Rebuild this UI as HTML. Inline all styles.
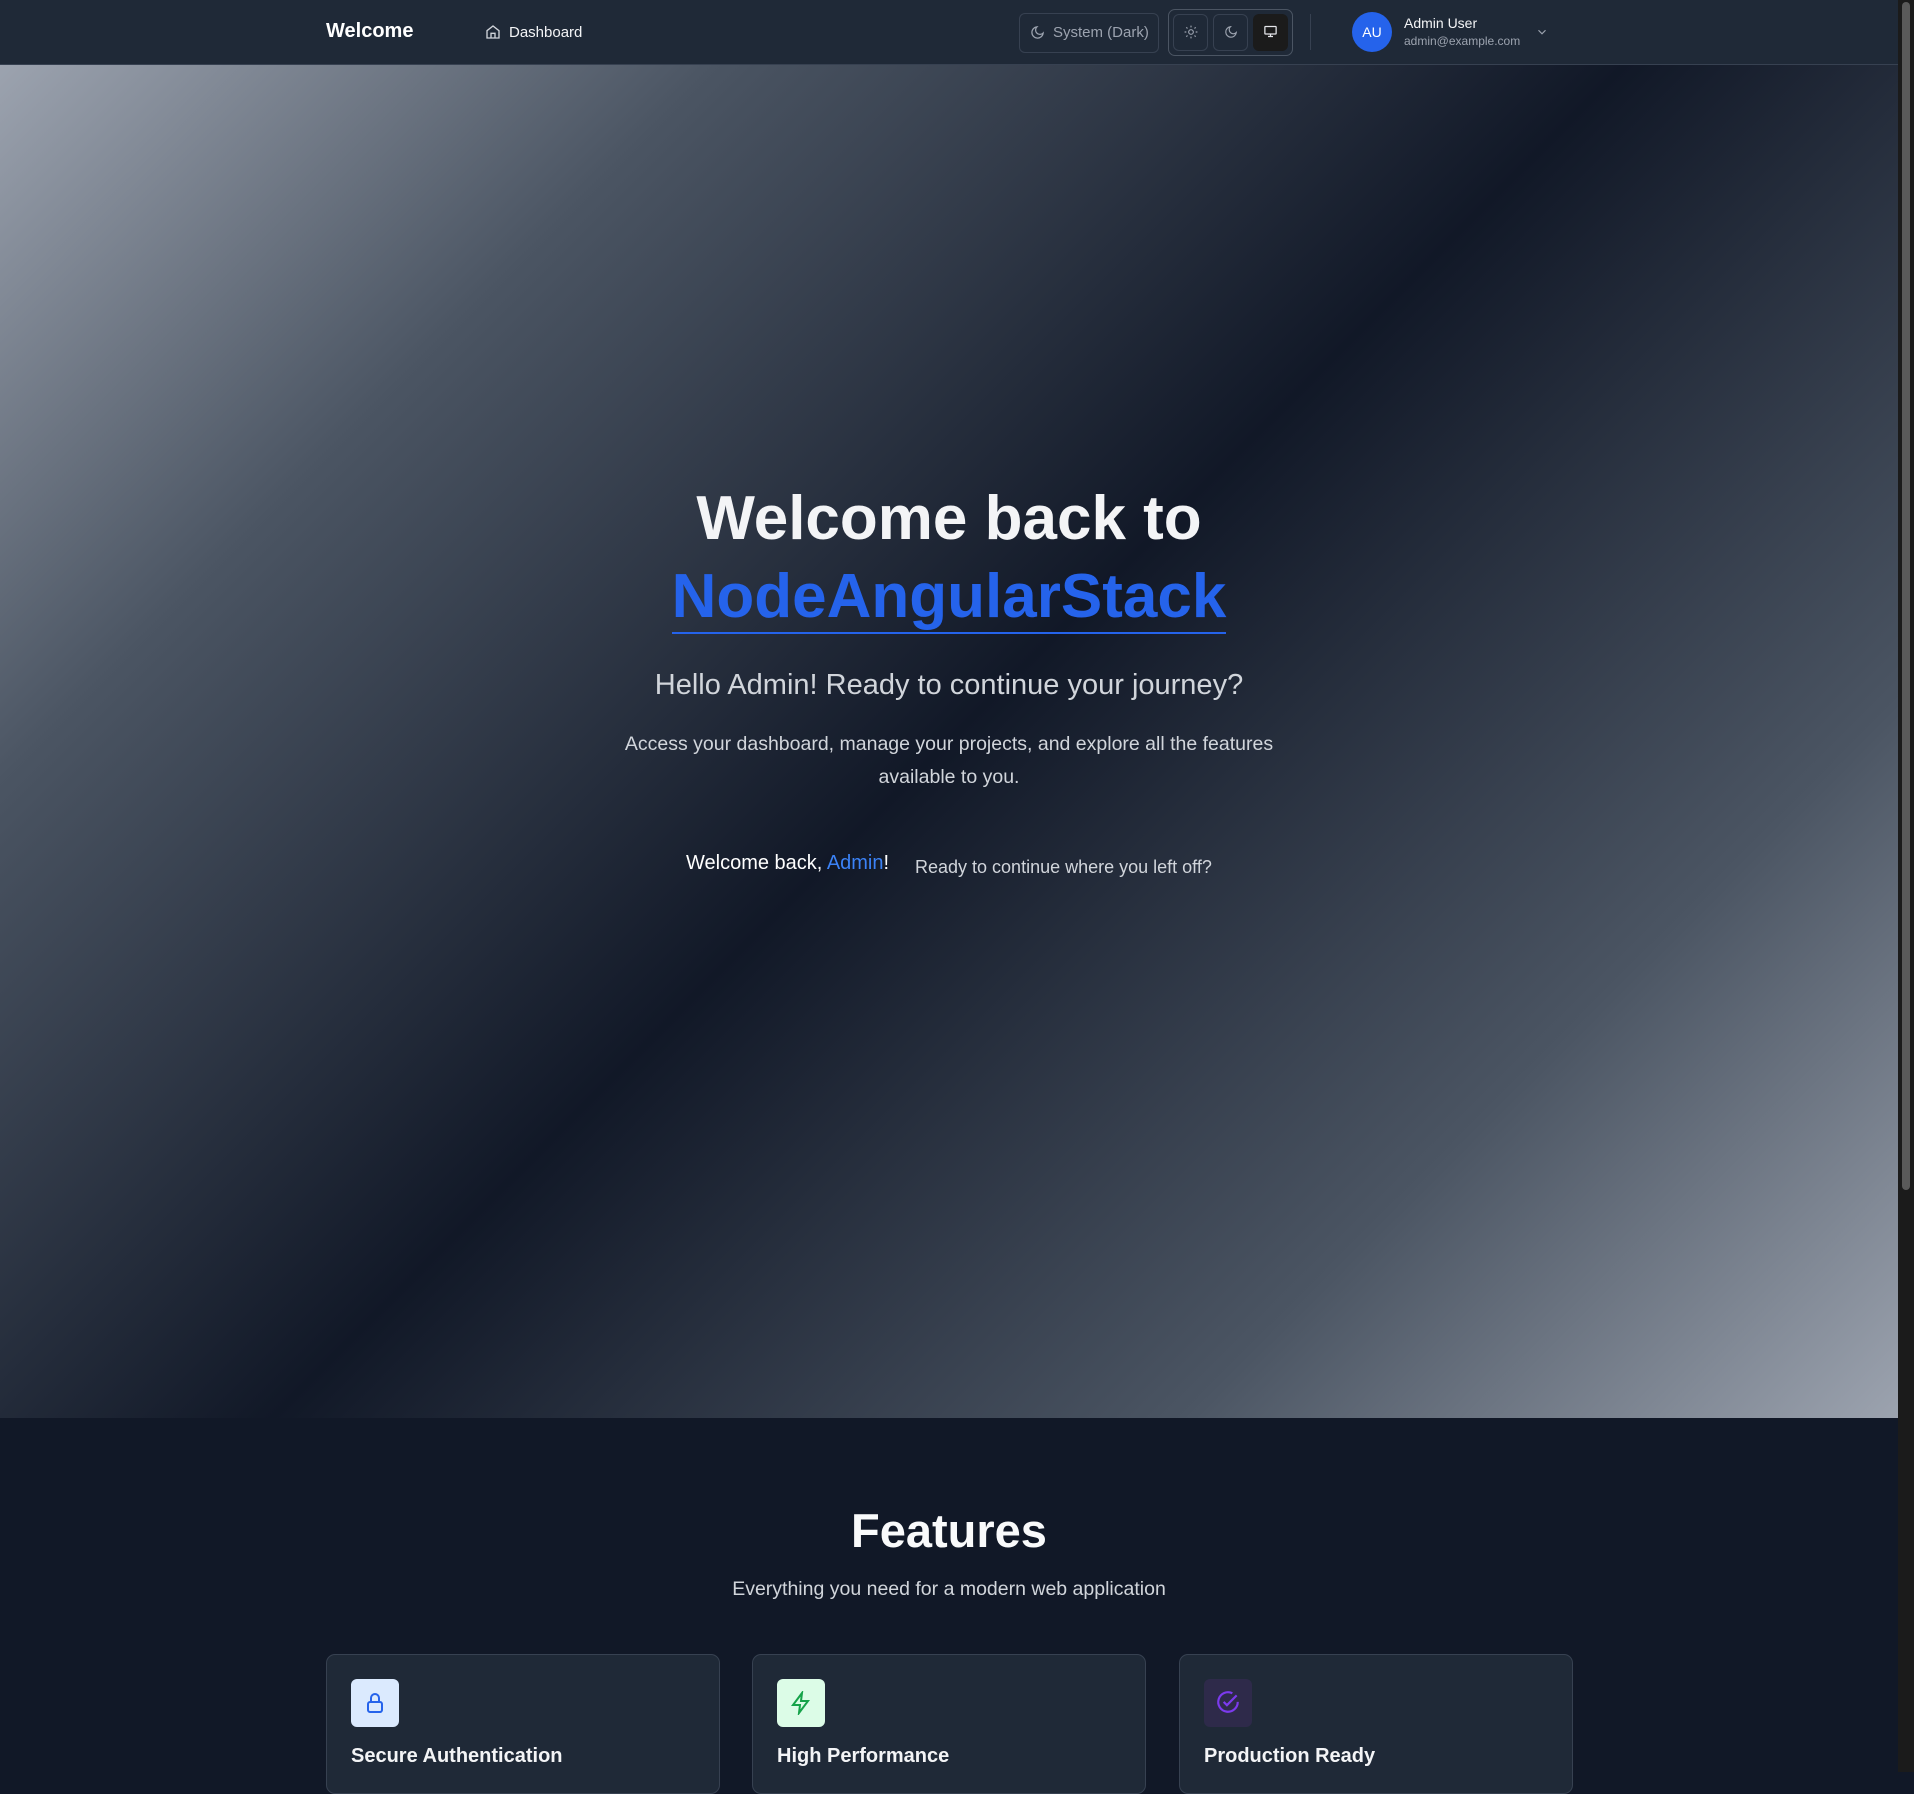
<!DOCTYPE html>
<html><head><meta charset="utf-8"><style>
*{box-sizing:border-box;margin:0;padding:0}
body{width:1914px;height:1772px;overflow:hidden;background:#111827;font-family:"Liberation Sans",sans-serif;position:relative}
.main{position:absolute;left:0;top:0;width:1898px;height:1772px}
header{position:absolute;left:0;top:0;width:1898px;height:65px;background:#1f2937;border-bottom:1px solid #374151}
.abs{position:absolute}
.hero{position:absolute;left:0;top:65px;width:1898px;height:1353px;background:linear-gradient(135deg,#9ca3af 0%,#4b5563 22%,#111827 50%,#4b5563 78%,#9ca3af 100%)}
.c{position:absolute;left:0;width:1898px;text-align:center}
.card{position:absolute;top:1654px;width:394px;height:140px;background:#1f2937;border:1px solid #374151;border-radius:9px}
.ib{position:absolute;left:24px;top:24px;width:48px;height:48px;border-radius:6px;display:flex;align-items:center;justify-content:center}
.ct{position:absolute;left:24px;top:90px;color:#f3f4f6;font-size:20px;font-weight:bold}
.sb{position:absolute;left:1898px;top:0;width:16px;height:1772px;background:#1b1b1b}
.th{position:absolute;left:1902px;top:2px;width:8px;height:1188px;background:#5a5a5a;border-radius:4px}
</style></head><body>
<div class="main">
<header>
<div class="abs" style="left:326px;top:20px;color:#fff;font-size:20px;font-weight:bold">Welcome</div>
<svg class="abs" style="left:485px;top:24px" width="16" height="16" viewBox="0 0 24 24" fill="none" stroke="#d1d5db" stroke-width="2"><path d="M3 10l9-7 9 7v11H3z M9 21v-7h6v7"/></svg>
<div class="abs" style="left:509px;top:24px;color:#f3f4f6;font-size:15px">Dashboard</div>
<div class="abs" style="left:1019px;top:13px;width:140px;height:40px;border:1px solid #374151;border-radius:6px;color:#9ca3af;font-size:15px;line-height:38px;padding-left:33px">System (Dark)</div>
<svg class="abs" style="left:1030px;top:25px" width="15" height="15" viewBox="0 0 24 24" fill="none" stroke="#9ca3af" stroke-width="2"><path d="M21 13A9 9 0 1 1 11 3a7 7 0 0 0 10 10z"/></svg>
<div class="abs" style="left:1168px;top:9px;width:125px;height:47px;border:1px solid #4b5563;border-radius:7px"></div>
<div class="abs" style="left:1173px;top:14px;width:35px;height:37px;border:1px solid #374151;border-radius:6px"></div>
<div class="abs" style="left:1213px;top:14px;width:35px;height:37px;border:1px solid #374151;border-radius:6px"></div>
<div class="abs" style="left:1253px;top:14px;width:35px;height:37px;background:#1b1b1b;border-radius:6px"></div>
<svg class="abs" style="left:1184px;top:25px" width="14" height="14" viewBox="0 0 24 24" fill="none" stroke="#9ca3af" stroke-width="2"><circle cx="12" cy="12" r="4"/><path d="M12 1v3M12 20v3M1 12h3M20 12h3M4 4l2 2M18 18l2 2M4 20l2-2M18 6l2-2"/></svg>
<svg class="abs" style="left:1224px;top:25px" width="14" height="14" viewBox="0 0 24 24" fill="none" stroke="#9ca3af" stroke-width="2"><path d="M21 13A9 9 0 1 1 11 3a7 7 0 0 0 10 10z"/></svg>
<svg class="abs" style="left:1263px;top:24px" width="15" height="15" viewBox="0 0 24 24" fill="none" stroke="#e5e7eb" stroke-width="2"><rect x="3" y="4" width="18" height="12" rx="1"/><path d="M12 16v4M8 20h8"/></svg>
<div class="abs" style="left:1310px;top:14px;width:1px;height:36px;background:#374151"></div>
<div class="abs" style="left:1352px;top:12px;width:40px;height:40px;border-radius:50%;background:#2563eb;color:#fff;font-size:14px;text-align:center;line-height:40px">AU</div>
<div class="abs" style="left:1404px;top:15px;color:#f3f4f6;font-size:14px">Admin User</div>
<div class="abs" style="left:1404px;top:34px;color:#9ca3af;font-size:12px">admin@example.com</div>
<svg class="abs" style="left:1535px;top:25px" width="14" height="14" viewBox="0 0 24 24" fill="none" stroke="#9ca3af" stroke-width="2"><path d="M6 9l6 6 6-6"/></svg>
</header>
<div class="hero"></div>
<div class="c" style="top:480px;color:#f3f4f6;font-size:62px;font-weight:bold;line-height:78px">Welcome back to</div>
<div class="c" style="top:558px;font-size:62px;font-weight:bold;line-height:78px"><span style="color:#2563eb;border-bottom:2px solid #2563eb;line-height:70px;display:inline-block">NodeAngularStack</span></div>
<div class="c" style="top:669px;color:#d1d5db;font-size:29px">Hello Admin! Ready to continue your journey?</div>
<div class="c" style="top:728px;color:#d1d5db;font-size:19.5px;line-height:33px">Access your dashboard, manage your projects, and explore all the features<br>available to you.</div>
<div class="abs" style="left:686px;top:852px;color:#fff;font-size:20px">Welcome back, <span style="color:#3b82f6">Admin</span>!</div>
<div class="abs" style="left:915px;top:857px;color:#d1d5db;font-size:18px">Ready to continue where you left off?</div>
<div class="c" style="top:1503px;color:#f9fafb;font-size:47px;font-weight:bold">Features</div>
<div class="c" style="top:1578px;color:#d1d5db;font-size:19.5px">Everything you need for a modern web application</div>
<div class="card" style="left:326px"><div class="ib" style="background:#dbeafe"><svg width="24" height="24" viewBox="0 0 24 24" fill="none" stroke="#2563eb" stroke-width="2"><rect x="5" y="11" width="14" height="10" rx="2"/><path d="M8 11V7a4 4 0 0 1 8 0v4"/></svg></div><div class="ct">Secure Authentication</div></div>
<div class="card" style="left:752px"><div class="ib" style="background:#dcfce7"><svg width="24" height="24" viewBox="0 0 24 24" fill="none" stroke="#16a34a" stroke-width="2"><path d="M13 2L4 14h7l-1 8 9-12h-7z"/></svg></div><div class="ct">High Performance</div></div>
<div class="card" style="left:1179px"><div class="ib" style="background:#2e2a4a"><svg width="26" height="26" viewBox="0 0 24 24" fill="none" stroke="#7c3aed" stroke-width="2"><path d="M21 11a9 9 0 1 1-5-8"/><path d="M8 11l3 3 9-9"/></svg></div><div class="ct">Production Ready</div></div>
</div>
<div class="sb"></div><div class="th"></div>
</body></html>
